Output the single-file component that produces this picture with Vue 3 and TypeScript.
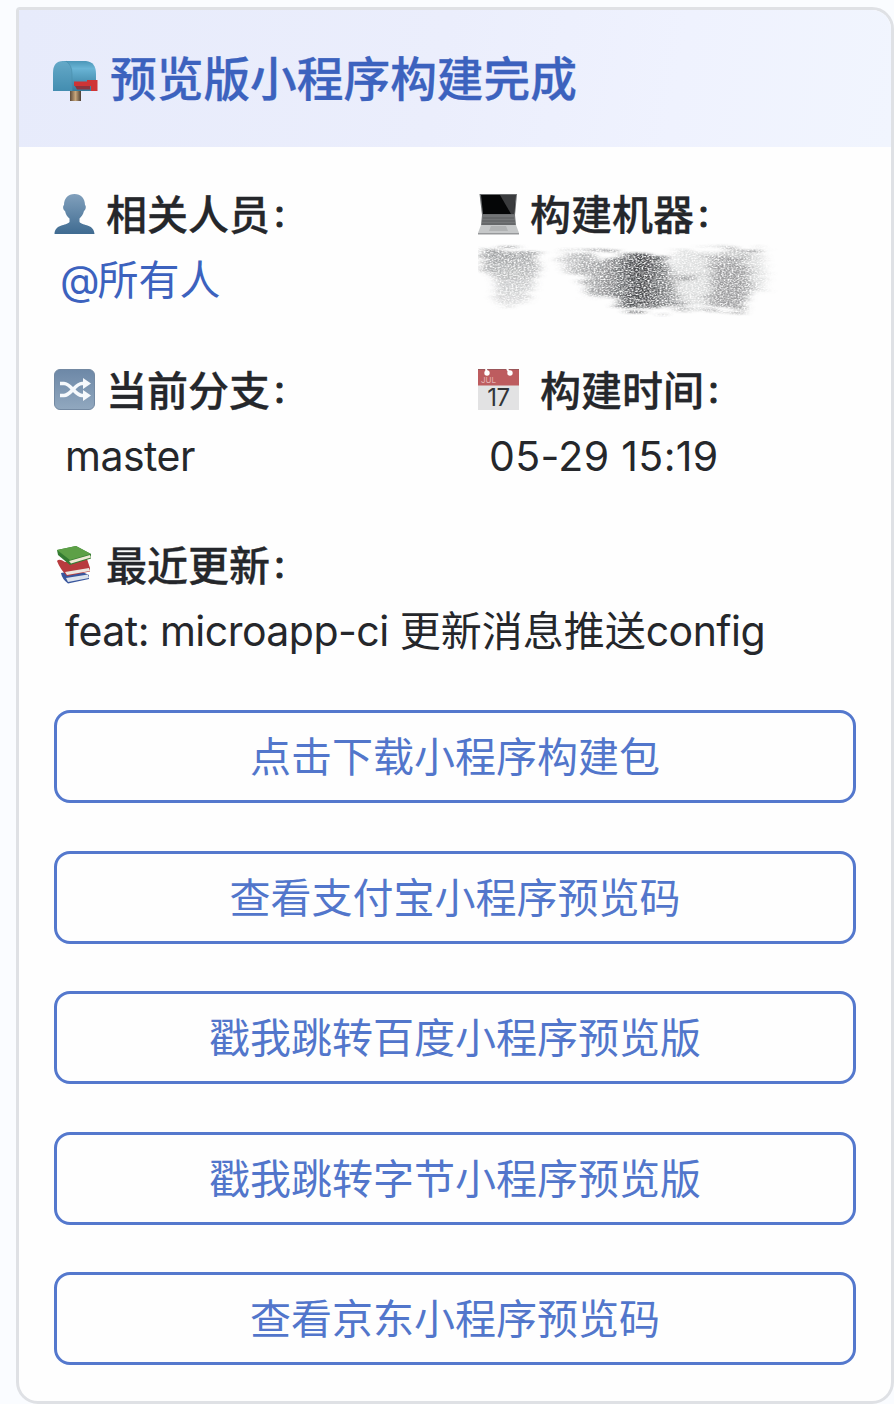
<script setup lang="ts">
const actions: string[] = [
  '点击下载小程序构建包',
  '查看支付宝小程序预览码',
  '戳我跳转百度小程序预览版',
  '戳我跳转字节小程序预览版',
  '查看京东小程序预览码',
]
</script>

<template>
  <main class="page">
    <article class="card">
      <header class="header">
        <svg class="mailbox" viewBox="0 0 46 46">
          <defs>
            <linearGradient id="mb" x1="0" y1="0" x2="0" y2="1">
              <stop offset="0" stop-color="#4b96b8" />
              <stop offset=".25" stop-color="#69b4d5" />
              <stop offset="1" stop-color="#347a9c" />
            </linearGradient>
            <linearGradient id="mf" x1="0" y1="0" x2="0" y2="1">
              <stop offset="0" stop-color="#65a9c8" />
              <stop offset="1" stop-color="#438db0" />
            </linearGradient>
            <linearGradient id="post">
              <stop offset="0" stop-color="#5c4a3a" />
              <stop offset=".5" stop-color="#c7a67b" />
              <stop offset="1" stop-color="#4b3d32" />
            </linearGradient>
          </defs>
          <rect x="18" y="31" width="11" height="12" fill="url(#post)" />
          <path d="M10 3H34Q44 4 44 16V33H12Z" fill="url(#mb)" />
          <path d="M1 33V15Q1 3 11 3Q20 4 20 16V33Z" fill="url(#mf)" />
          <path d="M20 33V16Q20 7 14 3" fill="none" stroke="#4b8fae" stroke-width=".7" />
          <path d="M35 22H45.500V33H39V28H22V23.500H35Z" fill="#cf3436" />
          <path d="M23 28H38V31.500H25Z" fill="#8d343e" />
        </svg>
        <h1 class="title">预览版小程序构建完成</h1>
      </header>

      <section class="body">
        <div class="fields">
          <div class="field">
            <div class="label">
              <svg class="icon" viewBox="0 0 41 41">
                <defs>
                  <linearGradient id="person" x1="0" y1="0" x2="0" y2="1">
                    <stop offset="0" stop-color="#81a0bc" />
                    <stop offset="1" stop-color="#3f6b91" />
                  </linearGradient>
                </defs>
                <path d="M20.500 0C27 0 31 4.500 31 11C32.500 12 31.800 16 30 17C29 21 27 23 25.500 24.500V28C29 32 40 30 40.500 40H.5C1 30 12 32 15.500 28V24.500C13.500 23 12 21 11 17C9 16 8.500 12 10 11C10 4.500 14 0 20.500 0Z" fill="url(#person)" />
              </svg>
              <span class="name">相关人员<span class="colon">：</span></span>
            </div>
            <div class="value mention"><span class="at">@</span>所有人</div>
          </div>

          <div class="field">
            <div class="label">
              <svg class="icon" viewBox="0 0 41 41">
                <path d="M1.500 0H39L37 21H4Z" fill="#6b6d6f" />
                <path d="M3 1H37.500L36 20H5Z" fill="#050607" />
                <path d="M22 1H37.500L36 20H33Z" fill="#3a3b3d" />
                <path d="M4 21H37L38 31H3Z" fill="#737577" />
                <path d="M5 24H36M4 27H37M4 30H37" stroke="#5a5c5e" stroke-width="1" />
                <path d="M3 31H38L41 39H0Z" fill="#c6c8c9" />
                <path d="M13 32H28L30 37H11Z" fill="#b1b3b4" />
                <path d="M0 39H41V40.500H0Z" fill="#97999b" />
              </svg>
              <span class="name">构建机器<span class="colon">：</span></span>
            </div>
            <div class="value">
              <svg class="scribble" viewBox="0 0 300 76">
                <defs>
                  <filter id="pencil" x="-5%" y="-10%" width="110%" height="120%">
                    <feTurbulence type="fractalNoise" baseFrequency=".035 .3" numOctaves="2" seed="8" result="edge" />
                    <feDisplacementMap in="SourceGraphic" in2="edge" scale="28" xChannelSelector="R" yChannelSelector="B" result="rough" />
                    <feGaussianBlur in="rough" stdDeviation="4 1" result="soft" />
                    <feTurbulence type="fractalNoise" baseFrequency=".5 .75" numOctaves="2" seed="4" />
                    <feColorMatrix values="0 0 0 0 0  0 0 0 0 0  0 0 0 0 0  2.400 0 0 0 -.5" result="grain" />
                    <feComposite in="soft" in2="grain" operator="in" />
                    <feGaussianBlur stdDeviation=".4" />
                  </filter>
                  <linearGradient id="fade" x1="0" y1="0" x2="0" y2="1">
                    <stop offset="0" stop-color="#55575a" stop-opacity=".6" />
                    <stop offset="1" stop-color="#77797b" stop-opacity=".22" />
                  </linearGradient>
                  <linearGradient id="dark">
                    <stop offset="0" stop-color="#55575a" stop-opacity=".25" />
                    <stop offset=".3" stop-color="#55575a" stop-opacity=".55" />
                    <stop offset=".65" stop-color="#3a3c3f" stop-opacity=".95" />
                    <stop offset="1" stop-color="#55575a" stop-opacity=".42" />
                  </linearGradient>
                </defs>
                <g filter="url(#pencil)">
                  <path d="M5 6L58 10V37L46 60L22 65L18 39L4 27Z" fill="url(#fade)" />
                  <path d="M82 12L186 12L192 38L208 68L142 65L135 55L105 54L108 38L82 23Z" fill="url(#dark)" />
                  <path d="M196 11L285 7L288 48L270 51L269 68L205 67L192 42Z" fill="#77797b" opacity=".24" />
                  <path d="M232 15L266 15L270 30L268 68L228 67L234 40Z" fill="#4e5053" opacity=".45" />
                  <path d="M196 32H222V36H196ZM245 7H283V11H245Z" fill="#4e5053" opacity=".6" />
                </g>
              </svg>
            </div>
          </div>

          <div class="field">
            <div class="label">
              <svg class="icon" viewBox="0 0 41 41">
                <defs>
                  <linearGradient id="shuffle" x1="0" y1="0" x2="0" y2="1">
                    <stop offset="0" stop-color="#6d88a7" />
                    <stop offset="1" stop-color="#91a8bf" />
                  </linearGradient>
                </defs>
                <rect x=".5" y=".5" width="40" height="40" rx="5.500" fill="url(#shuffle)" stroke="#7389a2" />
                <path d="M6 14.500H10C17 14.500 21 26.500 28 26.500H31M6 26.500H10C17 26.500 21 14.500 28 14.500H31" fill="none" stroke="#f6f9fc" stroke-width="3.600" />
                <path d="M29 9L37 14.500L29 20ZM29 21L37 26.500L29 32Z" fill="#f6f9fc" />
              </svg>
              <span class="name">当前分支<span class="colon">：</span></span>
            </div>
            <div class="value latin"><span class="branch">master</span></div>
          </div>

          <div class="field">
            <div class="label wide">
              <svg class="icon" viewBox="0 0 41 41">
                <rect width="41" height="41" fill="#e2e2e3" />
                <rect width="41" height="16.500" fill="#bd5c5f" />
                <path d="M0 .5H41" stroke="#9b565a" />
                <path d="M8 0L9 4M29 0L32 4" stroke="#fff" stroke-width="2" />
                <circle cx="9" cy="4" r="2.700" fill="#fff" />
                <circle cx="32" cy="4" r="2.700" fill="#fff" />
                <text x="3" y="13.500" class="month">JUL</text>
                <text x="20.500" y="36.500" text-anchor="middle" class="day">17</text>
              </svg>
              <span class="name">构建时间<span class="colon">：</span></span>
            </div>
            <div class="value latin"><span class="time">05-29 15:19</span></div>
          </div>

          <div class="field full">
            <div class="label">
              <svg class="icon" viewBox="0 0 41 41">
                <path d="M7 28L24 25L35 30V34L14 38.500Q8 34 7 28Z" fill="#38569d" />
                <path d="M12 33L34 29.500L35 33L14 37Z" fill="#dce3ed" />
                <path d="M3 16Q5 13 11 17L33 14L36 23L36 26.500L13 31Q6 24 3 16Z" fill="#b83b3e" />
                <path d="M11 27L35 23L36 26L13 30Z" fill="#ece6df" />
                <path d="M3 5L22 1L37 9L37 13.500L16 20L4 10Z" fill="#347c32" />
                <path d="M3 5L22 1L37 9L16 15Z" fill="#5da047" />
                <path d="M15 16L36 10L37 12.500L17 18.500Z" fill="#eee9d5" />
              </svg>
              <span class="name">最近更新<span class="colon">：</span></span>
            </div>
            <div class="value latin"><span class="commit">feat: microapp-ci </span><span class="cjk">更新消息推送</span><span class="commit">config</span></div>
          </div>
        </div>

        <div class="actions">
          <button v-for="action in actions" :key="action" class="action" type="button">{{ action }}</button>
        </div>
      </section>
    </article>
  </main>
</template>

<style>
body {
  margin: 0;
  background: #fafcff;
}
</style>

<style scoped>
.page {
  box-sizing: border-box;
  width: 894px;
  height: 1404px;
  padding: 7px 0 0 16px;
  overflow: hidden;
  background: #fafcff;
  font-family: Inter, "Noto Sans CJK SC", sans-serif;
  color: #25272b;
}
.card {
  box-sizing: border-box;
  width: 878px;
  height: 1397px;
  border: 3px solid #dfe1e5;
  border-radius: 4px 22px 22px 22px;
  background: #fefefe;
  overflow: hidden;
}
.header {
  box-sizing: border-box;
  height: 137px;
  padding: 0 33px;
  display: flex;
  align-items: center;
  background: linear-gradient(100deg, #e7ebfb 0%, #ebeefc 48%, #eff2fe 75%, #f1f5fe 100%);
}
.mailbox {
  width: 46px;
  height: 46px;
  flex: none;
  margin-top: 5px;
}
.title {
  margin: 0 0 6px 12px;
  font-family: "Noto Sans CJK SC", sans-serif;
  font-size: 46.700px;
  line-height: 68px;
  font-weight: 500;
  color: #3c62be;
  -webkit-text-stroke: 0.3px #3c62be;
  white-space: nowrap;
}
.body {
  padding: 35px 35px 0;
}
.fields {
  display: grid;
  grid-template-columns: 424px 1fr;
  row-gap: 44.500px;
}
.full {
  grid-column: 1 / -1;
}
.label {
  height: 66px;
  display: flex;
  align-items: center;
  gap: 11px;
  font-family: "Noto Sans CJK SC", sans-serif;
  font-size: 41px;
  font-weight: 500;
  white-space: nowrap;
}
.wide {
  gap: 21px;
}
.name {
  line-height: 60px;
  margin-bottom: 6px;
  -webkit-text-stroke: 0.3px #25272b;
}
.colon {
  margin-left: 2px;
  font-size: 30px;
  line-height: 1;
  vertical-align: 4px;
  -webkit-text-stroke: 1px #25272b;
}
.icon {
  width: 41px;
  height: 41px;
  flex: none;
  margin-top: -2px;
}
.month {
  font: 8px Inter, sans-serif;
  fill: #e5b2b2;
}
.day {
  font: 24px Inter, sans-serif;
  fill: #333538;
  letter-spacing: -0.5px;
}
.value {
  height: 65px;
  line-height: 65px;
  font-size: 41px;
  white-space: pre;
}
.mention {
  padding-left: 6px;
  color: #3c62be;
}
.at {
  letter-spacing: -2px;
}
.latin {
  padding-left: 11px;
}
.branch {
  letter-spacing: -0.500px;
}
.time {
  letter-spacing: 0.350px;
}
.commit {
  letter-spacing: -0.520px;
}
.scribble {
  display: block;
  width: 300px;
  height: 76px;
  margin-top: -6px;
}
.actions {
  margin-top: 46px;
  display: flex;
  flex-direction: column;
  gap: 47.600px;
}
.action {
  box-sizing: border-box;
  width: 802px;
  height: 93px;
  padding: 0 0 5px;
  border: 3px solid #5478cd;
  border-radius: 16px;
  background: transparent;
  font-family: "Noto Sans CJK SC", sans-serif;
  font-size: 41px;
  line-height: 60px;
  color: #5276cb;
}
</style>
